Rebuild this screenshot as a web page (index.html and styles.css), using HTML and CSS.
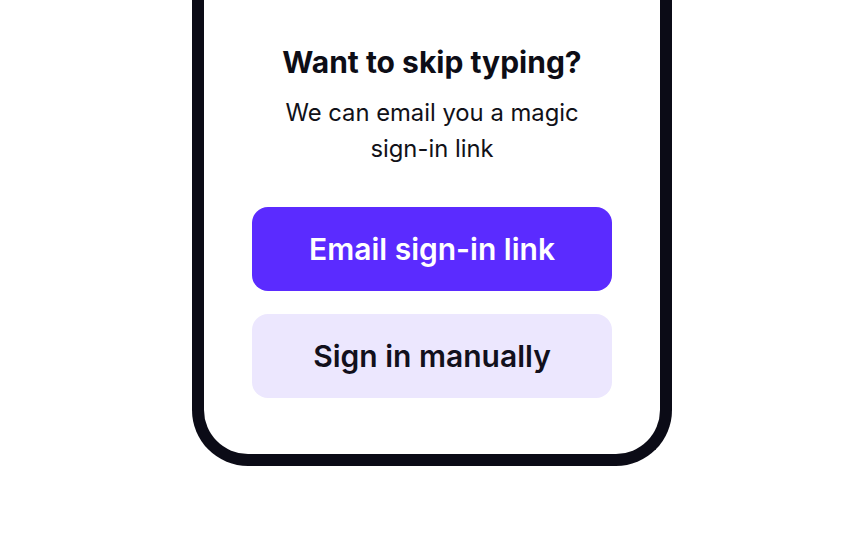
FILE: index.html
```html
<!DOCTYPE html>
<html>
<head>
<meta charset="utf-8">
<link rel="stylesheet" href="styles.css">
</head>
<body>
<div class="phone">
  <div class="content">
    <h1 class="title">Want to skip typing?</h1>
    <p class="desc">We can email you a magic sign-in link</p>
    <div class="actions">
      <button class="btn btn-primary">Email sign-in link</button>
      <button class="btn btn-secondary">Sign in manually</button>
    </div>
  </div>
</div>
</body>
</html>
```

FILE: styles.css
```css
html, body {
  margin: 0;
  padding: 0;
  background: #ffffff;
}
body {
  width: 864px;
  height: 540px;
  overflow: hidden;
  font-family: Inter, "Noto Sans", sans-serif;
}
.phone {
  box-sizing: border-box;
  width: 480px;
  height: 466px;
  margin-left: 192px;
  border: 12px solid #0b0b16;
  border-top: none;
  border-radius: 0 0 56px 56px;
  background: #fff;
  display: flex;
  flex-direction: column;
  justify-content: flex-end;
}
.content {
  display: flex;
  flex-direction: column;
  align-items: center;
  padding: 0 48px 56px;
}
.title {
  margin: 0;
  font-size: 30px;
  line-height: 36px;
  font-weight: 700;
  color: #0d0d16;
}
.desc {
  margin: 15px 0 0;
  width: 320px;
  text-align: center;
  font-size: 23.8px;
  line-height: 36px;
  font-weight: 400;
  color: #111118;
}
.actions {
  margin-top: 40px;
  width: 360px;
  display: flex;
  flex-direction: column;
  gap: 23px;
}
.btn {
  height: 84px;
  border: none;
  border-radius: 16px;
  font-family: Inter, "Noto Sans", sans-serif;
  font-size: 30px;
  font-weight: 600;
  display: flex;
  align-items: center;
  justify-content: center;
  padding: 0;
}
.btn-primary {
  background: #5b2bff;
  color: #ffffff;
}
.btn-secondary {
  background: #ece7fe;
  color: #12101c;
}
```
